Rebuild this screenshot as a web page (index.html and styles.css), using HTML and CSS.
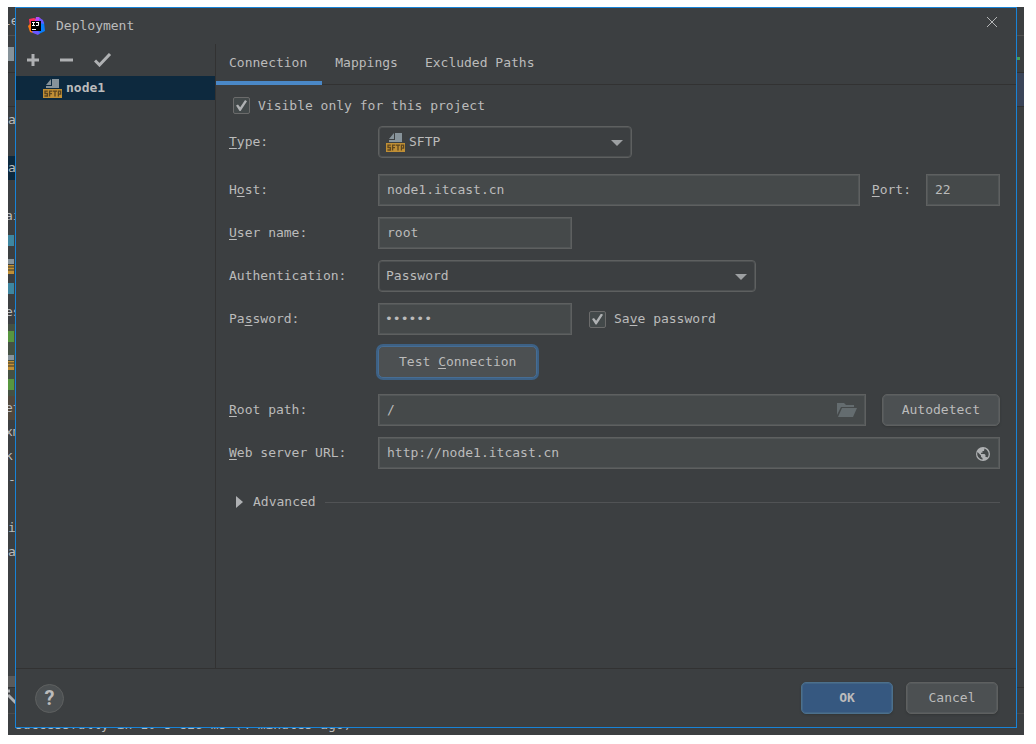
FILE: index.html
```html
<!DOCTYPE html>
<html lang="en">
<head>
  <meta charset="UTF-8">
  <meta name="viewport" content="width=device-width, initial-scale=1.0">
  <title>Deployment</title>
  <link rel="stylesheet" href="styles.css">
</head>
<body>
  <svg class="sprite" aria-hidden="true">
    <symbol id="sftp" viewBox="0 0 19 19">
      <path fill="#87939a" d="M9 0h7v9H3V7h6z"/>
      <path fill="#87939a" d="M8 0v6H3z"/>
      <rect fill="#c08f35" y="10" width="19" height="9"/>
      <g fill="none" stroke="#5c4620" stroke-width="1.3">
        <path d="M4.8 12.2H2v2.3h2.4V17H1.4"/>
        <path d="M6.6 17.6v-5.4h2.8M6.6 14.7h2.4"/>
        <path d="M10 12.2h4M12 12.2v5.4"/>
        <path d="M15.4 17.6v-5.4h2.2v2.9h-2.2"/>
      </g>
    </symbol>
    <symbol id="arrow" viewBox="0 0 12 6">
      <path fill="#9da0a2" d="M0 0h12L6 6z"/>
    </symbol>
  </svg>

  <div class="ide">
    <!-- main window behind the dialog -->
    <div class="ide-title">le</div>
    <div class="ide-nav"><i class="folder grey"></i><i class="run"></i></div>
    <div class="ide-tabs"></div>
    <div class="ide-body">
      <ul class="tree">
        <li>a</li>
        <li></li>
        <li class="selected">a</li>
        <li></li>
        <li class="cut">ai</li>
        <li><i class="folder"></i></li>
        <li><i class="file"></i></li>
        <li><i class="folder"></i></li>
        <li class="cut">es</li>
        <li class="added"><i class="folder green"></i></li>
        <li class="added"><i class="file"></i></li>
        <li class="added"><i class="folder green"></i></li>
        <li class="excluded cut">et</li>
        <li class="cut">xm</li>
        <li class="cut">k</li>
        <li>-</li>
        <li></li>
        <li>i</li>
        <li>a</li>
      </ul>
      <div class="tree-scroll"></div>
    </div>
    <div class="ide-tools">
      <svg width="10" height="20" viewBox="0 0 10 20"><path d="M0 3h2M0 7l9 9" stroke="#afb1b3" stroke-width="3" fill="none"/></svg>
    </div>
    <div class="ide-status">successfully in 10 s 826 ms (4 minutes ago)</div>

    <form class="dialog">
      <header class="titlebar">
        <svg width="18" height="18" viewBox="0 0 18 18">
          <path fill="#fe315d" d="M1 2l5-1 6 3-4 10-6-3z"/>
          <path fill="#f97a12" d="M0 9l3-3 3 5-1 5-3-1z"/>
          <path fill="#b74af7" d="M8 0h3l3 3-2 3-5-2z"/>
          <path fill="#087cfa" d="M11 2l5 3 1 9-6 3-7-2 7-3z"/>
          <path fill="#6b57ff" d="M11 1l4 2 1 4-4-1zM4 14l6 0 2 2-2 2-5-2z"/>
          <rect x="3" y="4" width="10" height="10" fill="#000"/>
          <path stroke="#fff" fill="none" d="M4 5.500h3M5.500 5.500v3M4 8.500h3M8 5.500h3M10.500 5v3.500H8M4 12.500h4"/>
        </svg>
        <h1>Deployment</h1>
        <button type="button" class="icon-btn close" aria-label="Close">
          <svg width="12" height="12" viewBox="0 0 12 12"><path d="M1 1l10 10M11 1L1 11" stroke="#b4b6b7" fill="none"/></svg>
        </button>
      </header>

      <div class="main">
        <aside class="servers">
          <div class="toolbar">
            <button type="button" class="icon-btn" aria-label="Add">
              <svg width="14" height="14" viewBox="0 0 14 14"><path d="M7 1v12M1 7h12" stroke="#afb1b3" stroke-width="3"/></svg>
            </button>
            <button type="button" class="icon-btn" aria-label="Remove">
              <svg width="14" height="14" viewBox="0 0 14 14"><path d="M0 7h13" stroke="#afb1b3" stroke-width="3"/></svg>
            </button>
            <button type="button" class="icon-btn" aria-label="Use as default">
              <svg width="18" height="14" viewBox="0 0 18 14"><path d="M1 7.500l4.500 4.500L16 1" stroke="#afb1b3" stroke-width="3" fill="none"/></svg>
            </button>
          </div>
          <a href="#node1" class="server">
            <svg width="19" height="19"><use href="#sftp"/></svg>
            node1
          </a>
        </aside>

        <section class="settings">
          <nav class="tabs">
            <a href="#connection" class="active">Connection</a>
            <a href="#mappings">Mappings</a>
            <a href="#excluded">Excluded Paths</a>
          </nav>

          <div class="fields">
            <label class="check visible-only"><input type="checkbox" checked>Visible only for this project</label>

            <div class="row spaced">
              <label for="type"><u>T</u>ype:</label>
              <div class="combo with-icon type">
                <svg class="combo-icon" width="19" height="19"><use href="#sftp"/></svg>
                <select id="type"><option>SFTP</option></select>
                <svg class="combo-arrow" width="12" height="6"><use href="#arrow"/></svg>
              </div>
            </div>

            <div class="row">
              <label for="host">H<u>o</u>st:</label>
              <input type="text" id="host" class="grow" value="node1.itcast.cn">
              <label for="port" class="port-label"><u>P</u>ort:</label>
              <input type="text" id="port" class="port" value="22">
            </div>

            <div class="row">
              <label for="user"><u>U</u>ser name:</label>
              <input type="text" id="user" class="short" value="root">
            </div>

            <div class="row">
              <label for="auth">Authentication:</label>
              <div class="combo auth">
                <select id="auth"><option>Password</option></select>
                <svg class="combo-arrow" width="12" height="6"><use href="#arrow"/></svg>
              </div>
            </div>

            <div class="row">
              <label for="password">Pa<u>s</u>sword:</label>
              <input type="password" id="password" class="short" value="123456">
              <label class="check save"><input type="checkbox" checked><span>Sa<u>v</u>e password</span></label>
            </div>

            <div class="row spaced">
              <button type="button" class="btn test">Test <u>C</u>onnection</button>
            </div>

            <div class="row">
              <label for="root"><u>R</u>oot path:</label>
              <div class="input-icon grow">
                <input type="text" id="root" value="/">
                <svg width="20" height="14" viewBox="0 0 20 14"><path fill="#646c6f" d="M0 0h7l2 2h8v2H4L0 12zM5 5h15l-4 9H1z"/></svg>
              </div>
              <button type="button" class="btn autodetect">Autodetect</button>
            </div>

            <div class="row">
              <label for="url"><u>W</u>eb server URL:</label>
              <div class="input-icon grow">
                <input type="text" id="url" value="http://node1.itcast.cn">
                <svg width="16" height="16" viewBox="0 0 16 16">
                  <circle cx="8" cy="8" r="7" fill="#afb1b3"/>
                  <path fill="#45494a" d="M2.500 6l3.500 3.500V11l1.500 1v1.800A6 6 0 0 1 2.500 6zM9.500 2.400a6 6 0 0 1 3 9.200L11.500 11h-1V9L9.500 8H6V6.800h1.500V5H9z"/>
                </svg>
              </div>
            </div>

            <button type="button" class="advanced">
              <svg width="8" height="12" viewBox="0 0 8 12"><path fill="#afb1b3" d="M0 0l7 6-7 6z"/></svg>
              <span>Advanced</span>
            </button>
          </div>
        </section>
      </div>

      <footer class="footer">
        <button type="button" class="help" aria-label="Help">?</button>
        <button type="submit" class="btn primary">OK</button>
        <button type="button" class="btn">Cancel</button>
      </footer>
    </form>
  </div>
</body>
</html>
```

FILE: styles.css
```css
* {
  box-sizing: border-box;
}

body {
  margin: 0;
  padding: 7px 12px 9px 8px;
  height: 100vh;
  background: #fff;
  color: #bbb;
  font: 13px/16px "DejaVu Sans Mono", monospace;
}

input, select, button {
  font: inherit;
  color: inherit;
}

button {
  cursor: pointer;
}

a {
  color: inherit;
  text-decoration: none;
}

u {
  text-decoration: underline;
  text-underline-offset: 2px;
}

.sprite {
  display: none;
}

/* Main window */
.ide {
  position: relative;
  display: flex;
  flex-direction: column;
  height: 100%;
  background: #3c3f41;
  overflow: hidden;
}

.ide-title {
  height: 29px;
  padding-top: 6px;
  border-bottom: 1px solid #515151;
  text-indent: -5px;
}

.ide-nav {
  display: flex;
  align-items: center;
  justify-content: space-between;
  height: 37px;
  border-bottom: 1px solid #323232;
}

.ide-tabs {
  height: 34px;
  border-bottom: 1px solid #323232;
  background: linear-gradient(to left, #3b4559 20px, transparent 20px);
}

.ide-body {
  flex: 1;
  display: flex;
  flex-direction: column;
  justify-content: space-between;
  border-bottom: 1px solid #323232;
}

.ide-tools {
  height: 26px;
  border-bottom: 1px solid #4b4b4b;
}

.ide-status {
  height: 21px;
  padding: 3px 0 0 7px;
}

.tree {
  width: 200px;
  margin: 0;
  padding: 1px 0 0;
  list-style: none;
}

.tree li {
  display: flex;
  align-items: center;
  height: 24px;
}

.tree .cut {
  text-indent: -3px;
}

.tree .selected {
  background: #0d293e;
}

.tree .added {
  background: #455143;
}

.tree .excluded {
  background: #50473d;
}

.tree-scroll {
  width: 200px;
  height: 11px;
  background: #5a5a5a;
}

.folder {
  width: 6px;
  height: 11px;
  background: #3e86a0;
}

.folder.green {
  background: #57963f;
}

.folder.grey {
  height: 14px;
  background: #87939a;
}

.file {
  width: 6px;
  height: 15px;
  margin-top: 5px;
  background: linear-gradient(#87939a 5px, transparent 5px 6px, #c08f35 6px 7px, #7a6231 7px 9px, #c08f35 9px 10px, #7a6231 10px 12px, #c08f35 12px);
}

.run {
  width: 5px;
  height: 3px;
  margin: 8px 4px 0 0;
  background: #499c54;
}

/* Dialog */
.dialog {
  position: absolute;
  inset: 0 7px 7px;
  display: flex;
  flex-direction: column;
  border: 1px solid #1883d7;
  background: #3c3f41;
}

.titlebar {
  display: flex;
  align-items: center;
  height: 36px;
  padding: 0 18px 0 12px;
}

.titlebar h1 {
  flex: 1;
  margin: 0 0 0 10px;
  font-size: 13px;
  font-weight: normal;
}

.icon-btn {
  display: flex;
  padding: 0;
  border: 0;
  background: none;
}

.close {
  margin-bottom: 8px;
}

.main {
  flex: 1;
  display: flex;
  border-bottom: 1px solid #323232;
}

.servers {
  width: 200px;
  border-right: 1px solid #323232;
}

.toolbar {
  display: flex;
  align-items: center;
  gap: 20px;
  height: 32px;
  padding-left: 10px;
}

.server {
  display: flex;
  align-items: center;
  gap: 4px;
  height: 24px;
  padding-left: 27px;
  background: #0d293e;
  font-weight: bold;
}

.settings {
  flex: 1;
}

.tabs {
  display: flex;
  height: 41px;
  border-bottom: 1px solid #323232;
}

.tabs a {
  height: 41px;
  padding: 11px 14px 0 13px;
}

.tabs .active {
  padding-right: 15px;
  border-bottom: 4px solid #4a88c7;
}

.fields {
  display: flex;
  flex-direction: column;
  gap: 11px;
  padding: 11px 16px 0 13px;
}

.row {
  display: flex;
  align-items: center;
}

.row.spaced {
  margin-bottom: 5px;
}

.row > label:first-child {
  width: 149px;
}

.grow {
  flex: 1;
}

input[type="text"], input[type="password"] {
  min-width: 0;
  height: 32px;
  padding: 0 8px 2px;
  border: 1px solid #5e6060;
  background: #45494a;
  box-shadow: inset 0 0 0 1px #525657;
  outline: none;
}

input[type="password"] {
  padding: 0 6px 2px;
}

.short {
  width: 194px;
}

.port {
  width: 74px;
}

.port-label {
  margin: 0 15px 0 12px;
}

.check {
  display: flex;
  align-items: center;
  gap: 8px;
}

.visible-only {
  height: 19px;
  padding-left: 4px;
}

.save {
  margin-left: 17px;
}

input[type="checkbox"] {
  appearance: none;
  display: grid;
  place-items: center;
  width: 17px;
  height: 17px;
  margin: 0;
  border: 1px solid #6b6b6b;
  border-radius: 2px;
  background: #43494a;
}

input[type="checkbox"]:checked::before {
  content: "";
  width: 11px;
  height: 11px;
  background: #afb1b3;
  clip-path: polygon(0 50%, 18% 42%, 38% 65%, 82% 0, 100% 12%, 42% 100%, 32% 100%);
}

.combo {
  position: relative;
}

.combo select {
  appearance: none;
  width: 100%;
  height: 32px;
  padding: 0 24px 0 7px;
  border: 1px solid #5e6060;
  border-radius: 4px;
  background: #3c3f41;
  box-shadow: inset 0 0 0 1px #4d5051;
  outline: none;
}

.combo.with-icon select {
  padding-left: 30px;
}

.combo-icon, .combo-arrow {
  position: absolute;
  pointer-events: none;
}

.combo-icon {
  top: 7px;
  left: 8px;
}

.combo-arrow {
  top: 14px;
  right: 9px;
}

.type {
  width: 254px;
}

.auth {
  width: 378px;
}

.input-icon {
  position: relative;
  display: flex;
}

.input-icon input {
  width: 100%;
  padding-right: 32px;
}

.input-icon svg {
  position: absolute;
  top: 9px;
  right: 9px;
}

.btn {
  min-width: 92px;
  height: 32px;
  padding: 0 19px;
  border: 1px solid #5e6060;
  border-radius: 5px;
  background: #4c5052;
  box-shadow: inset 0 0 0 1px #55595b, 0 1px 2px #333637;
}

.test {
  margin-left: 149px;
  padding: 0 20px;
  border-color: #466d94;
  box-shadow: 0 0 0 2px #3d6185;
}

.autodetect {
  margin-left: 16px;
}

.primary {
  border-color: #4c708c;
  background: #365880;
  box-shadow: inset 0 0 0 1px #416486, 0 1px 2px #333637;
  font-weight: bold;
}

.advanced {
  display: flex;
  align-items: center;
  gap: 9px;
  margin-top: 14px;
  padding: 0 0 0 7px;
  border: 0;
  background: none;
}

.advanced::after {
  content: "";
  flex: 1;
  height: 1px;
  background: #515355;
}

.footer {
  display: flex;
  align-items: center;
  gap: 13px;
  height: 58px;
  padding: 0 18px 0 19px;
}

.help {
  width: 29px;
  height: 29px;
  margin-right: auto;
  padding: 0;
  border: 1px solid #5e6060;
  border-radius: 50%;
  background: #4c5052;
  font: bold 20px/20px Roboto, sans-serif;
}
```
